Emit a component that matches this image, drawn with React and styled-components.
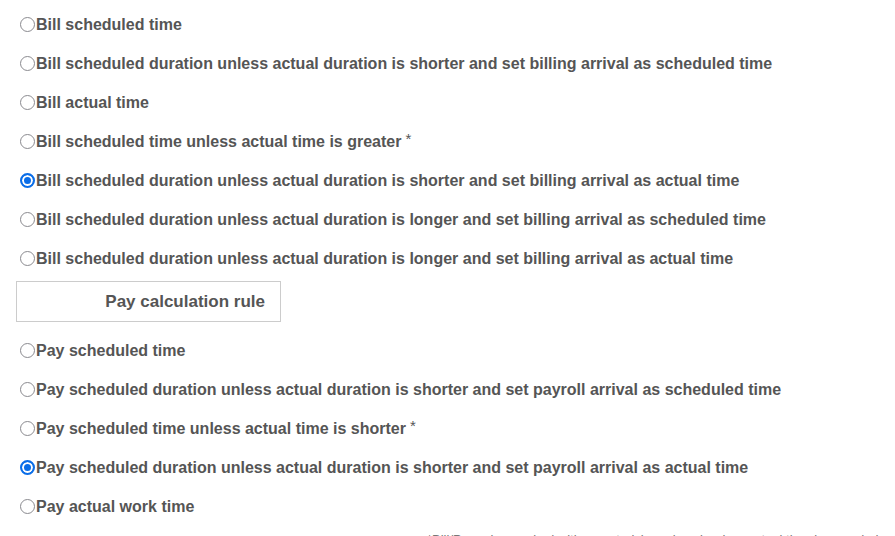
import styled, { createGlobalStyle } from "styled-components";

const GlobalStyle = createGlobalStyle`
  body {
    margin: 0;
    background: #fff;
    font-family: "Liberation Sans", Arial, sans-serif;
    color: #555;
    overflow: hidden;
  }
`;

const Page = styled.div`
  padding: 5px 0 0 15px;
  width: 880px;
`;

const Group = styled.div`
  display: flex;
  flex-direction: column;
`;

const Option = styled.label`
  display: flex;
  align-items: center;
  height: 39px;
  font-size: 16px;
  font-weight: bold;
  color: #555;
  white-space: nowrap;
  cursor: pointer;
`;

const Radio = styled.input`
  appearance: none;
  box-sizing: border-box;
  width: 15px;
  height: 15px;
  margin: 0 1px 0 5px;
  border: 1.5px solid #8a8a8f;
  border-radius: 50%;
  background: #fff;
  flex-shrink: 0;

  &:checked {
    border: 2px solid #0b6ee8;
    background: #0b6ee8;
    box-shadow: inset 0 0 0 2px #fff;
  }
`;

const Star = styled.span`
  font-weight: normal;
  font-size: 15px;
  margin-left: 4px;
  align-self: flex-start;
  margin-top: 8px;
`;

const SectionTitle = styled.div`
  display: flex;
  justify-content: flex-end;
  align-items: center;
  box-sizing: border-box;
  width: 265px;
  height: 41px;
  margin: 3px 0 9px 1px;
  padding-right: 15px;
  border: 1px solid #ccc;
  font-size: 17px;
  font-weight: bold;
  color: #555;
`;

const Note = styled.div`
  margin: 6px 0 0 412px;
  font-size: 13px;
  color: #777;
  white-space: nowrap;
`;

const billRules = [
  ["Bill scheduled time"],
  ["Bill scheduled duration unless actual duration is shorter and set billing arrival as scheduled time"],
  ["Bill actual time"],
  ["Bill scheduled time unless actual time is greater", true],
  ["Bill scheduled duration unless actual duration is shorter and set billing arrival as actual time"],
  ["Bill scheduled duration unless actual duration is longer and set billing arrival as scheduled time"],
  ["Bill scheduled duration unless actual duration is longer and set billing arrival as actual time"],
];

const payRules = [
  ["Pay scheduled time"],
  ["Pay scheduled duration unless actual duration is shorter and set payroll arrival as scheduled time"],
  ["Pay scheduled time unless actual time is shorter", true],
  ["Pay scheduled duration unless actual duration is shorter and set payroll arrival as actual time"],
  ["Pay actual work time"],
];

const RuleGroup = ({ name, rules, selected }) => (
  <Group>
    {rules.map(([rule, starred], i) => (
      <Option key={rule}>
        <Radio type="radio" name={name} defaultChecked={i === selected} />
        {rule}
        {starred && <Star>*</Star>}
      </Option>
    ))}
  </Group>
);

export default function App() {
  return (
    <>
      <GlobalStyle />
      <Page>
        <RuleGroup name="bill" rules={billRules} selected={4} />
        <SectionTitle>Pay calculation rule</SectionTitle>
        <RuleGroup name="pay" rules={payRules} selected={3} />
        <Note>
          *Bill/Pay rules marked with an asterisk apply only when actual time is recorded
        </Note>
      </Page>
    </>
  );
}
